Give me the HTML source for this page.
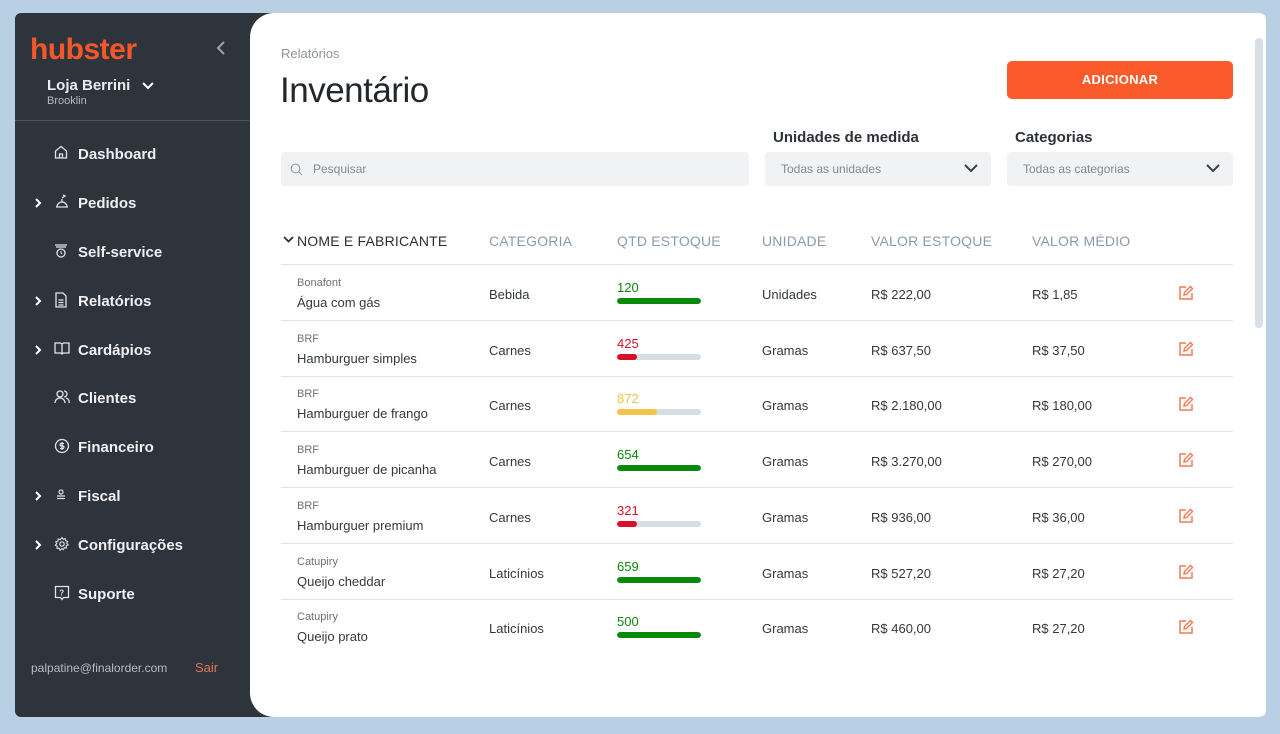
<!DOCTYPE html>
<html><head><meta charset="utf-8"><style>
*{margin:0;padding:0;box-sizing:border-box}
body{width:1280px;height:734px;background:#b9cfe3;font-family:"Liberation Sans",sans-serif;position:relative;overflow:hidden}
.app{position:absolute;left:15px;top:13px;width:1251px;height:704px;background:#2e343b;border-radius:6px;overflow:hidden}
.side{position:absolute;left:0;top:0;width:235px;height:704px;color:#e9ecef}
.logo{position:absolute;left:15px;top:20px;font-size:30px;color:#f4572a;letter-spacing:-0.5px;font-weight:bold}
.coll{position:absolute;left:200px;top:27px}
.store{position:absolute;left:32px;top:64px;font-size:15px;font-weight:bold}
.sub{position:absolute;left:32px;top:82px;font-size:11px;color:#b7bcc2}
.dd{position:absolute;left:127px;top:69px}
.hr{position:absolute;left:0;top:107px;width:235px;height:1px;background:#4c545c}
.nav{position:absolute;left:0;font-size:15px;font-weight:bold;color:#eef0f2;height:20px;width:235px;margin-top:2px}
.nav .t{position:absolute;left:63px;top:0}
.nav svg.i{position:absolute;left:39px;top:-1px}
.nav svg.c{position:absolute;left:19px;top:2px}
.foot{position:absolute;left:16px;top:648px;font-size:12px;color:#b7bcc2}
.sair{position:absolute;left:180px;top:647px;font-size:13px;color:#e0765c}
.main{position:absolute;left:235px;top:0;width:1016px;height:704px;background:#fff;border-radius:24px 0 0 24px}
.crumb{position:absolute;left:31px;top:33px;font-size:13px;color:#8f969c}
h1{position:absolute;left:30px;top:58px;font-size:35px;font-weight:normal;color:#22272b;letter-spacing:-0.5px}
.btn{position:absolute;left:757px;top:48px;width:226px;height:38px;background:#fb5b2a;border-radius:5px;color:#fff;font-size:13px;font-weight:bold;text-align:center;line-height:38px;letter-spacing:.3px}
.lbl{position:absolute;top:116px;font-size:15px;font-weight:bold;color:#2d3238}
.inp{position:absolute;top:139px;height:34px;background:#f0f2f4;border-radius:4px;font-size:12px;color:#848b92;line-height:34px}
.th{position:absolute;top:220px;font-size:14px;color:#8a9bad;letter-spacing:.2px}
.line{position:absolute;left:31px;width:952px;height:1px;background:#e1e5e9}
.r{position:absolute;left:0;width:1016px;height:55px}
.r div{position:absolute;font-size:13px;color:#33383d}
.b{font-size:11px!important;color:#6b7177!important}
.bar{height:6px;width:84px;background:#d5dde5;border-radius:3px;overflow:hidden}
.bar i{display:block;height:6px;border-radius:3px}
.scroll{position:absolute;left:1005px;top:25px;width:8px;height:290px;background:#d8dfe6;border-radius:4px}
</style></head><body>
<div class="app">
<div class="side">
<div class="logo">hubster</div>
<svg class="coll" width="12" height="16" viewBox="0 0 12 16"><path d="M9 2L3 8l6 6" stroke="#9aa1a8" stroke-width="2" fill="none"/></svg>
<div class="store">Loja Berrini</div><div class="sub">Brooklin</div>
<svg class="dd" width="12" height="8" viewBox="0 0 12 8"><path d="M1 1l5 5 5-5" stroke="#fff" stroke-width="2" fill="none"/></svg>
<div class="hr"></div>

<div class="nav" style="top:131px"><svg class="i" width="14" height="14" viewBox="0 0 14 14"><path d="M1.5 13V6L7 1.5 12.5 6v7zM5.5 13V9h3v4" stroke="#dfe3e6" stroke-width="1.3" fill="none"/></svg><span class="t">Dashboard</span></div>
<div class="nav" style="top:180px"><svg class="c" width="8" height="12" viewBox="0 0 8 12"><path d="M2 2l4 4-4 4" stroke="#fff" stroke-width="2" fill="none"/></svg><svg class="i" width="16" height="16" viewBox="0 0 16 16"><path d="M2 13h12M3 13a5 5 0 0 1 10 0M8 8V5M9 1l2 1-3 2" stroke="#dfe3e6" stroke-width="1.3" fill="none"/></svg><span class="t">Pedidos</span></div>
<div class="nav" style="top:229px"><svg class="i" width="14" height="16" viewBox="0 0 14 16"><path d="M1 2h12M2 4h10" stroke="#dfe3e6" stroke-width="1.3"/><circle cx="7" cy="10" r="4" stroke="#dfe3e6" stroke-width="1.3" fill="none"/><path d="M7 8v2l1 1" stroke="#dfe3e6" stroke-width="1"/></svg><span class="t">Self-service</span></div>
<div class="nav" style="top:278px"><svg class="c" width="8" height="12" viewBox="0 0 8 12"><path d="M2 2l4 4-4 4" stroke="#fff" stroke-width="2" fill="none"/></svg><svg class="i" width="14" height="16" viewBox="0 0 14 16"><path d="M2 1h7l3 3v11H2zM4.5 8h5M4.5 10.5h5M4.5 13h5" stroke="#dfe3e6" stroke-width="1.3" fill="none"/></svg><span class="t">Relatórios</span></div>
<div class="nav" style="top:327px"><svg class="c" width="8" height="12" viewBox="0 0 8 12"><path d="M2 2l4 4-4 4" stroke="#fff" stroke-width="2" fill="none"/></svg><svg class="i" width="16" height="14" viewBox="0 0 16 14"><path d="M1 2h5.5l1.5 1 1.5-1H15v10H9.5L8 13l-1.5-1H1zM8 3v10" stroke="#dfe3e6" stroke-width="1.3" fill="none"/></svg><span class="t">Cardápios</span></div>
<div class="nav" style="top:375px"><svg class="i" width="16" height="16" viewBox="0 0 16 16"><circle cx="6" cy="5" r="3" stroke="#dfe3e6" stroke-width="1.3" fill="none"/><path d="M1 14a5 5 0 0 1 10 0M10 2a3 3 0 0 1 0 6M12 9a4 4 0 0 1 3 5" stroke="#dfe3e6" stroke-width="1.3" fill="none"/></svg><span class="t">Clientes</span></div>
<div class="nav" style="top:424px"><svg class="i" width="16" height="16" viewBox="0 0 16 16"><circle cx="8" cy="8" r="6.5" stroke="#dfe3e6" stroke-width="1.3" fill="none"/><path d="M10 5.5H7a1.3 1.3 0 0 0 0 2.5h2a1.3 1.3 0 0 1 0 2.5H6M8 4v8" stroke="#dfe3e6" stroke-width="1.2" fill="none"/></svg><span class="t">Financeiro</span></div>
<div class="nav" style="top:473px"><svg class="c" width="8" height="12" viewBox="0 0 8 12"><path d="M2 2l4 4-4 4" stroke="#fff" stroke-width="2" fill="none"/></svg><svg class="i" width="14" height="14" viewBox="0 0 14 14"><circle cx="7" cy="5" r="2" stroke="#dfe3e6" stroke-width="1.2" fill="none"/><path d="M3 9h8M3 11.5h8" stroke="#dfe3e6" stroke-width="1.2"/></svg><span class="t">Fiscal</span></div>
<div class="nav" style="top:522px"><svg class="c" width="8" height="12" viewBox="0 0 8 12"><path d="M2 2l4 4-4 4" stroke="#fff" stroke-width="2" fill="none"/></svg><svg class="i" width="16" height="16" viewBox="0 0 16 16"><circle cx="8" cy="8" r="2.2" stroke="#dfe3e6" stroke-width="1.2" fill="none"/><path d="M8 1.5l1.2 1.8 2-.7.3 2.1 2.1.6-.9 1.9 1.4 1.6-1.9 1 .2 2.1-2.1-.1-1 1.9L8 12.6l-1.9 1.5-1-1.9-2.1.1.2-2.1-1.9-1 1.4-1.6-.9-1.9 2.1-.6.3-2.1 2 .7z" stroke="#dfe3e6" stroke-width="1.1" fill="none"/></svg><span class="t">Configurações</span></div>
<div class="nav" style="top:571px"><svg class="i" width="16" height="16" viewBox="0 0 16 16"><path d="M1.5 1.5h13v11H9.5L8 14.5 6.5 12.5h-5z" stroke="#dfe3e6" stroke-width="1.3" fill="none"/><text x="5.3" y="10.5" font-size="8" fill="#dfe3e6" font-family="Liberation Sans">?</text></svg><span class="t">Suporte</span></div>

<div class="foot">palpatine@finalorder.com</div><div class="sair">Sair</div>
</div>

<div class="main">
<div class="crumb">Relatórios</div>
<h1>Inventário</h1>
<div class="btn">ADICIONAR</div>
<div class="scroll"></div>
<div class="lbl" style="left:523px">Unidades de medida</div>
<div class="lbl" style="left:765px">Categorias</div>
<div class="inp" style="left:31px;width:468px;padding-left:32px"><svg style="position:absolute;left:9px;top:11px" width="13" height="13" viewBox="0 0 13 13"><circle cx="5.5" cy="5.5" r="4.3" stroke="#9aa1a8" stroke-width="1.2" fill="none"/><path d="M8.7 8.7L12 12" stroke="#9aa1a8" stroke-width="1.2"/></svg>Pesquisar</div>
<div class="inp" style="left:515px;width:226px;padding-left:16px">Todas as unidades<svg style="position:absolute;right:13px;top:12px" width="14" height="9" viewBox="0 0 14 9"><path d="M1 1l6 6 6-6" stroke="#3a4046" stroke-width="2" fill="none"/></svg></div>
<div class="inp" style="left:757px;width:226px;padding-left:16px">Todas as categorias<svg style="position:absolute;right:13px;top:12px" width="14" height="9" viewBox="0 0 14 9"><path d="M1 1l6 6 6-6" stroke="#3a4046" stroke-width="2" fill="none"/></svg></div>

<svg style="position:absolute;left:33px;top:223px" width="11" height="8" viewBox="0 0 11 8"><path d="M1 1l4.5 4.5L10 1" stroke="#2a2f34" stroke-width="1.8" fill="none"/></svg>
<div class="th" style="left:47px;color:#2a2f34">NOME E FABRICANTE</div>
<div class="th" style="left:239px">CATEGORIA</div>
<div class="th" style="left:367px">QTD ESTOQUE</div>
<div class="th" style="left:512px">UNIDADE</div>
<div class="th" style="left:621px">VALOR ESTOQUE</div>
<div class="th" style="left:782px">VALOR MÉDIO</div>
<div class="line" style="top:251px"></div>

<div id="rows"></div>
</div>
</div>
<script>
var d=[["Bonafont","Água com gás","Bebida","120","#0a8a0a",84,"Unidades","R$ 222,00","R$ 1,85"],
["BRF","Hamburguer simples","Carnes","425","#d9102a",20,"Gramas","R$ 637,50","R$ 37,50"],
["BRF","Hamburguer de frango","Carnes","872","#f6c34a",40,"Gramas","R$ 2.180,00","R$ 180,00"],
["BRF","Hamburguer de picanha","Carnes","654","#0a8a0a",84,"Gramas","R$ 3.270,00","R$ 270,00"],
["BRF","Hamburguer premium","Carnes","321","#d9102a",20,"Gramas","R$ 936,00","R$ 36,00"],
["Catupiry","Queijo cheddar","Laticínios","659","#0a8a0a",84,"Gramas","R$ 527,20","R$ 27,20"],
["Catupiry","Queijo prato","Laticínios","500","#0a8a0a",84,"Gramas","R$ 460,00","R$ 27,20"]];
var h="";d.forEach(function(r,i){var t=252+i*55.7;
h+='<div class="r" style="top:'+t+'px"><div class="b" style="left:47px;top:12px">'+r[0]+'</div><div style="left:47px;top:30px">'+r[1]+'</div><div style="left:239px;top:22px">'+r[2]+'</div><div style="left:367px;top:15px;color:'+r[4]+'">'+r[3]+'</div><div class="bar" style="left:367px;top:33px"><i style="width:'+r[5]+'px;background:'+r[4]+'"></i></div><div style="left:512px;top:22px">'+r[6]+'</div><div style="left:621px;top:22px">'+r[7]+'</div><div style="left:782px;top:22px">'+r[8]+'</div><svg style="position:absolute;left:928px;top:20px" width="16" height="16" viewBox="0 0 16 16"><path d="M8 2H2v12h12V8" stroke="#f07a55" stroke-width="1.5" fill="none"/><path d="M6 10l.5-2.5L12.5 1.5l2 2L8.5 9.5z" stroke="#f07a55" stroke-width="1.4" fill="none"/></svg></div>';
if(i<6)h+='<div class="line" style="top:'+(t+55)+'px"></div>';});
document.getElementById("rows").innerHTML=h;
</script>
</body></html>
